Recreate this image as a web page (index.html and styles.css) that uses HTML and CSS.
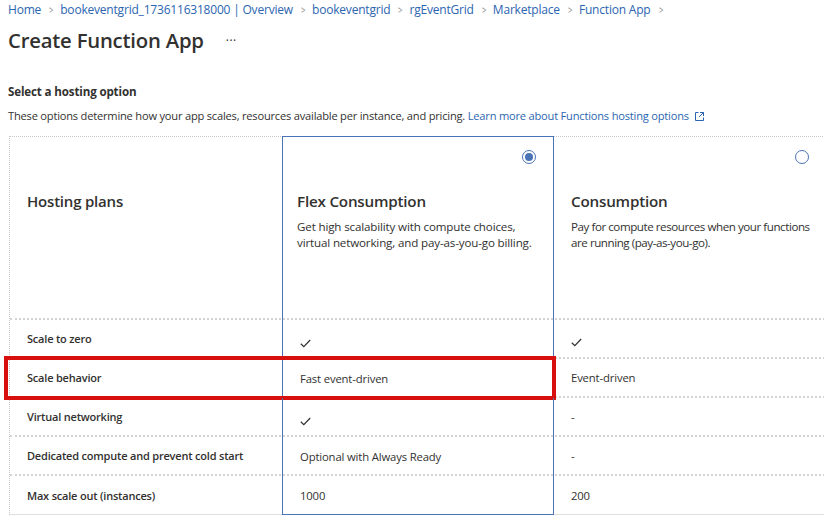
FILE: index.html
```html
<!DOCTYPE html>
<html lang="en">
<head>
<meta charset="utf-8">
<title>Create Function App</title>
<link rel="stylesheet" href="styles.css">
</head>
<body>
<div class="page">
  <nav class="crumbs">
    <a>Home</a><span class="chev">&gt;</span>
    <a>bookeventgrid_1736116318000 | Overview</a><span class="chev">&gt;</span>
    <a>bookeventgrid</a><span class="chev">&gt;</span>
    <a>rgEventGrid</a><span class="chev">&gt;</span>
    <a>Marketplace</a><span class="chev">&gt;</span>
    <a>Function App</a><span class="chev">&gt;</span>
  </nav>
  <div class="titlebar">
    <h1>Create Function App</h1>
    <span class="more">···</span>
  </div>
  <h2 class="section">Select a hosting option</h2>
  <p class="desc">These options determine how your app scales, resources available per instance, and pricing. <a class="link">Learn more about Functions hosting options <svg class="ext" width="9" height="9" viewBox="0 0 9 9"><path d="M3.5 0.5H0.5V8.5H8.5V5.5" fill="none" stroke="#2b65b0"/><path d="M5 0.5H8.5V4M8.5 0.5L4 5" fill="none" stroke="#2b65b0"/></svg></a></p>

  <div class="table">
    <div class="row head">
      <div class="cell">
        <div class="radio-area"></div>
        <div class="plan-title plan-first">Hosting plans</div>
      </div>
      <div class="cell sel">
        <div class="radio-area"><span class="radio on"></span></div>
        <div class="plan-title">Flex Consumption</div>
        <p class="plan-desc">Get high scalability with compute choices, virtual networking, and pay-as-you-go billing.</p>
      </div>
      <div class="cell wide">
        <div class="radio-area"><span class="radio"></span></div>
        <div class="plan-title">Consumption</div>
        <p class="plan-desc">Pay for compute resources when your functions are running (pay-as-you-go).</p>
      </div>
    </div>
    <div class="row">
      <div class="cell label">Scale to zero</div>
      <div class="cell sel val"><svg class="check" width="11" height="9" viewBox="0 0 11 9"><path d="M0.8 4.8L3.8 7.6L10.2 1" fill="none" stroke="#323130" stroke-width="1.2"/></svg></div>
      <div class="cell val"><svg class="check" width="11" height="9" viewBox="0 0 11 9"><path d="M0.8 4.8L3.8 7.6L10.2 1" fill="none" stroke="#323130" stroke-width="1.2"/></svg></div>
    </div>
    <div class="row highlight">
      <div class="cell label">Scale behavior</div>
      <div class="cell sel val">Fast event-driven</div>
      <div class="cell val">Event-driven</div>
    </div>
    <div class="row">
      <div class="cell label">Virtual networking</div>
      <div class="cell sel val"><svg class="check" width="11" height="9" viewBox="0 0 11 9"><path d="M0.8 4.8L3.8 7.6L10.2 1" fill="none" stroke="#323130" stroke-width="1.2"/></svg></div>
      <div class="cell val">-</div>
    </div>
    <div class="row">
      <div class="cell label">Dedicated compute and prevent cold start</div>
      <div class="cell sel val">Optional with Always Ready</div>
      <div class="cell val">-</div>
    </div>
    <div class="row last">
      <div class="cell label">Max scale out (instances)</div>
      <div class="cell sel val">1000</div>
      <div class="cell val">200</div>
    </div>
  </div>
</div>
</body>
</html>
```
FILE: styles.css
```css
html, body {
  margin: 0;
  padding: 0;
  background: #ffffff;
  overflow: hidden;
}
body {
  width: 824px;
  height: 521px;
  font-family: "Segoe UI", "Open Sans", "Noto Sans", sans-serif;
  color: #323130;
}
.page {
  padding: 0 0 0 8px;
}
.crumbs {
  height: 20px;
  line-height: 20px;
  font-size: 12px;
  white-space: nowrap;
  display: flex;
  align-items: center;
  letter-spacing: -0.2px;
}
.crumbs a {
  color: #2b65b0;
}
.chev {
  color: #8a8886;
  font-size: 11px;
  margin: 0 6px 0 7px;
  transform: scaleX(0.7);
  display: inline-block;
}
.titlebar {
  margin-top: 6px;
  height: 28px;
  display: flex;
  align-items: center;
}
h1 {
  margin: 0;
  font-size: 20.3px;
  font-weight: 600;
  line-height: 28px;
  letter-spacing: -0.2px;
  color: #323130;
}
.more {
  margin-left: 22px;
  font-size: 12px;
  color: #323130;
  letter-spacing: 0.5px;
}
.section {
  margin: 29px 0 0 0;
  font-size: 11.6px;
  font-weight: 700;
  line-height: 18px;
  letter-spacing: -0.15px;
}
.desc {
  margin: 7px 0 0 0;
  font-size: 11.1px;
  line-height: 16px;
  white-space: nowrap;
  letter-spacing: -0.2px;
}
.link {
  color: #2b65b0;
}
.ext {
  margin-left: 3px;
  vertical-align: -1px;
}
.table {
  margin-top: 12px;
  margin-left: 1px;
  width: 835px;
  border-top: 1px dotted #c8c8c8;
  border-left: 1px dotted #c8c8c8;
}
.row {
  display: grid;
  grid-template-columns: 272px 272px 290px;
  border-bottom: 2px dotted #d4d4d4;
  height: 39px;
  box-sizing: border-box;
  position: relative;
}
.row.head {
  height: 183px;
  border-bottom-width: 2px;
}
.row.last {
  border-bottom: 1px solid #e1dfdd;
}
.cell {
  padding: 0 0 0 17px;
  box-sizing: border-box;
}
.cell.sel {
  border-left: 1px solid #4a74b5;
  border-right: 1px solid #4a74b5;
  padding-left: 14px;
  margin-bottom: -2px;
}
.row.head .cell.sel {
  border-top: 1px solid #4a74b5;
  margin-top: -1px;
}
.row.last .cell.sel {
  border-bottom: 1px solid #4a74b5;
  margin-bottom: -1px;
}
.row.head .cell {
  padding-top: 13px;
  padding-right: 14px;
}
.row.head .cell.wide {
  padding-right: 4px;
}
.wide .plan-desc {
  letter-spacing: -0.45px;
  max-width: 244px;
}
.radio-area {
  height: 39px;
  display: flex;
  justify-content: flex-end;
  align-items: flex-start;
}
.radio {
  width: 14px;
  height: 14px;
  border-radius: 50%;
  border: 1px solid #4a74b5;
  box-sizing: border-box;
  margin-right: 3px;
  position: relative;
}
.wide .radio {
  margin-right: 31px;
}
.radio.on::after {
  content: "";
  position: absolute;
  left: 2px;
  top: 2px;
  width: 8px;
  height: 8px;
  border-radius: 50%;
  background: #4a74b5;
}
.plan-title {
  font-size: 15.2px;
  font-weight: 600;
  line-height: 24px;
  letter-spacing: -0.2px;
}
.plan-first {
  font-size: 15px;
}
.plan-desc {
  margin: 6px 0 0 0;
  font-size: 11.6px;
  line-height: 16px;
  letter-spacing: -0.15px;
}
.label, .val {
  display: flex;
  align-items: center;
  font-size: 11.3px;
  letter-spacing: -0.15px;
}
.label {
  font-weight: 600;
  font-size: 11px;
  letter-spacing: -0.2px;
  padding-left: 17px;
}
.val {
  padding-left: 17px;
}
.cell.sel.val {
  padding-left: 17px;
}
.check {
  margin-top: 7px;
}
.row.highlight::after {
  content: "";
  position: absolute;
  left: -6px;
  top: -3px;
  width: 552px;
  height: 44px;
  border: 4px solid #d70f0f;
  box-sizing: border-box;
  pointer-events: none;
}
```
